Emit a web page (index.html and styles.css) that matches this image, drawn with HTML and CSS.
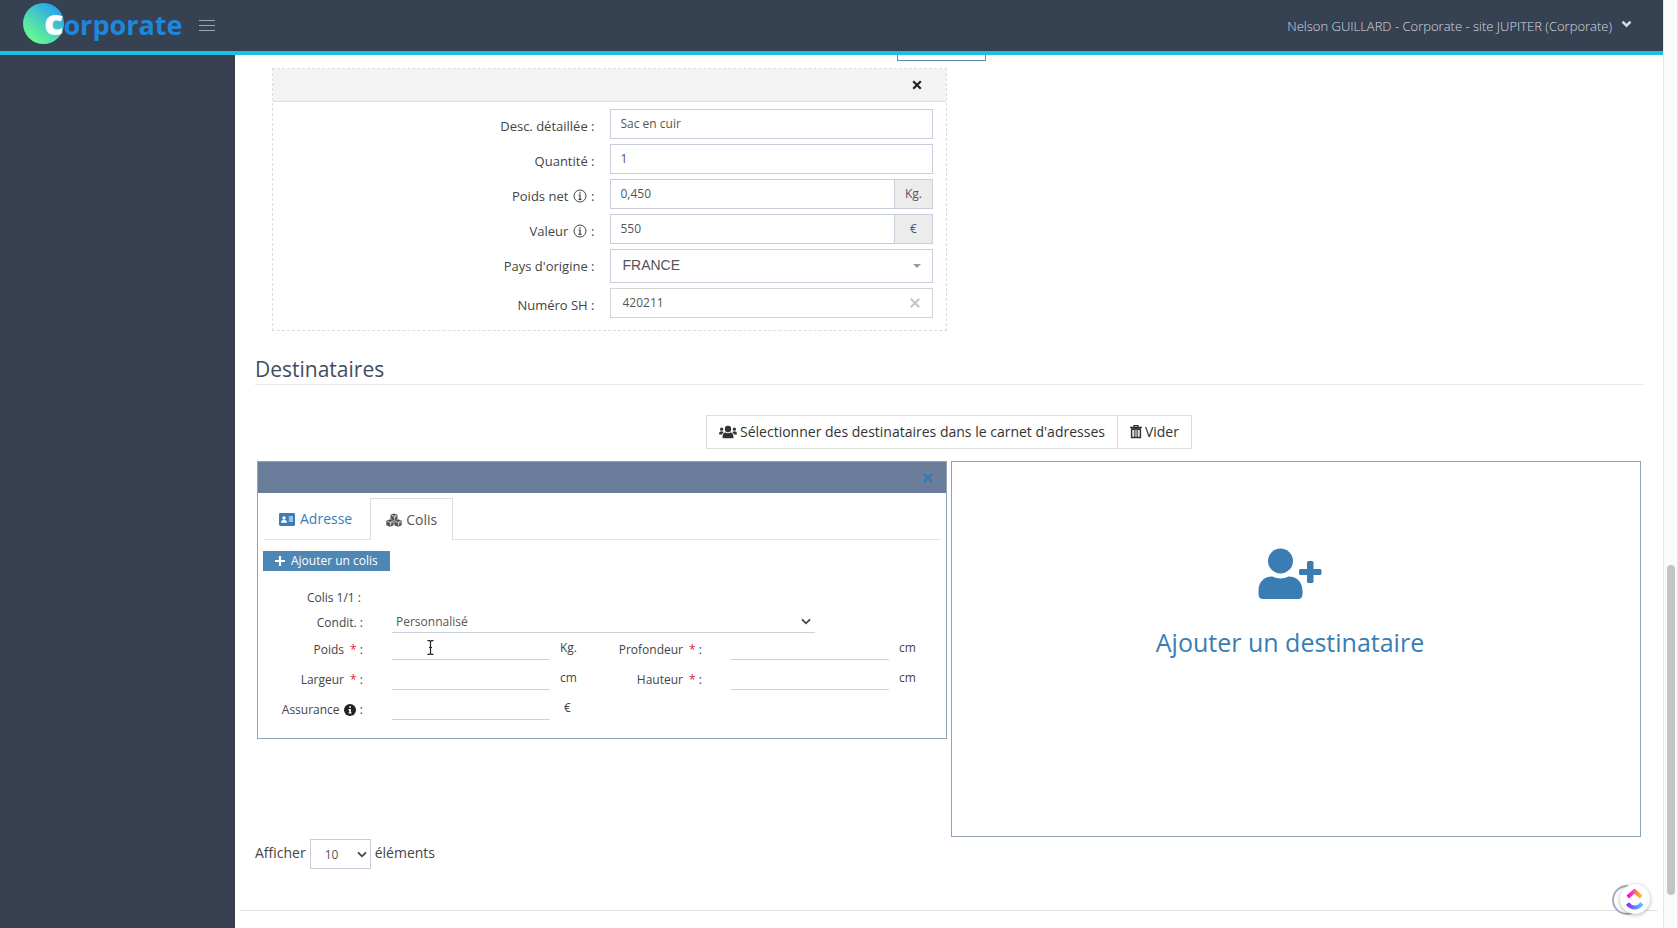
FILE: index.html
```html
<!DOCTYPE html>
<html lang="fr">
<head>
<meta charset="utf-8">
<title>Corporate - Destinataires</title>
<link rel="stylesheet" href="styles.css">
</head>
<body>
<div class="app">
  <header class="topbar">
    <a class="brand" href="#" aria-label="Corporate">
      <svg class="brand-disc" viewBox="0 0 41 41" aria-hidden="true">
        <defs><linearGradient id="disc" x1="0.15" y1="0.85" x2="0.75" y2="0.1"><stop offset="0" stop-color="#68fb90"/><stop offset="1" stop-color="#2ba6ea"/></linearGradient></defs>
        <circle cx="20.5" cy="20.5" r="20.5" fill="url(#disc)"/>
      </svg>
      <span class="brand-name"><span class="brand-initial">c</span>orporate</span>
    </a>
    <button class="menu-toggle" type="button" aria-label="Menu">
      <svg viewBox="0 0 16 12"><path d="M0 1.5h16M0 6.5h16M0 11.5h16" stroke="#9aa5b3" fill="none"/></svg>
    </button>
    <button class="account" type="button">Nelson GUILLARD - Corporate - site JUPITER (Corporate)
      <svg class="account-arrow" viewBox="0 0 11 8"><path d="M1.5 1.7 5.5 5.7 9.5 1.7" stroke="currentColor" stroke-width="2.6" fill="none"/></svg>
    </button>
  </header>

  <div class="body">
    <nav class="sidebar" aria-label="Navigation"></nav>
    <main class="content">
      <div class="columns">
        <div class="article-column">
          <div class="clipped-action"><button type="button" aria-label="Ajouter un article"></button></div>
          <section class="article">
            <div class="article-head">
              <button class="close" type="button" aria-label="Supprimer l'article">
                <svg viewBox="0 0 10 10"><path d="M1.2 1.2 8.8 8.8M8.8 1.2 1.2 8.8" stroke="currentColor" stroke-width="2.2"/></svg>
              </button>
            </div>
            <form class="article-form">
              <label for="desc">Desc. détaillée :</label>
              <input class="box" id="desc" type="text" value="Sac en cuir">
              <label for="qty">Quantité :</label>
              <input class="box" id="qty" type="text" value="1">
              <label for="net">Poids net <svg class="info" viewBox="0 0 14 14"><circle cx="7" cy="7" r="6" fill="none" stroke="currentColor"/><path d="M7 3.2v1.6M5.7 6.2H7v4M5.5 10.4h3" stroke="currentColor" stroke-width="1.2" fill="none"/></svg> :</label>
              <div class="addon-field"><input class="box" id="net" type="text" value="0,450"><span class="addon">Kg.</span></div>
              <label for="value">Valeur <svg class="info" viewBox="0 0 14 14"><circle cx="7" cy="7" r="6" fill="none" stroke="currentColor"/><path d="M7 3.2v1.6M5.7 6.2H7v4M5.5 10.4h3" stroke="currentColor" stroke-width="1.2" fill="none"/></svg> :</label>
              <div class="addon-field"><input class="box" id="value" type="text" value="550"><span class="addon">€</span></div>
              <label for="origin">Pays d'origine :</label>
              <div class="select-wrap">
                <select class="box country" id="origin"><option>FRANCE</option></select>
                <svg class="caret" viewBox="0 0 8 4"><path d="M0 0h8L4 4z" fill="#999"/></svg>
              </div>
              <label for="sh">Numéro SH :</label>
              <div class="select-wrap">
                <input class="box sh" id="sh" type="text" value="420211">
                <button class="clear" type="button" aria-label="Effacer"><svg viewBox="0 0 10 10"><path d="M.8.8 9.2 9.2M9.2.8.8 9.2" stroke="currentColor" stroke-width="2"/></svg></button>
              </div>
            </form>
          </section>
        </div>
      </div>

      <h2 class="section-title">Destinataires</h2>

      <div class="actions">
        <button type="button"><svg class="users" viewBox="0 0 18 14"><g fill="currentColor"><circle cx="9" cy="4" r="3.2"/><path d="M3.6 13.2V11c0-2 1.200-3.300 3-3.500 1.400 1 3.400 1 4.800 0 1.800.2 3 1.500 3 3.500v2.200z"/><circle cx="2.600" cy="4.200" r="1.600"/><circle cx="15.400" cy="4.200" r="1.600"/><path d="M.2 9.500V8c0-1 .7-1.600 1.600-1.600h1.800c.6 0 1 .2 1.300.5C4 7.500 3.300 8.400 3 9.500zM17.800 9.500V8c0-1-.7-1.600-1.600-1.600h-1.800c-.6 0-1 .2-1.300.5.900.6 1.600 1.500 1.900 2.600z"/></g></svg>Sélectionner des destinataires dans le carnet d'adresses</button>
        <button type="button"><svg class="trash" viewBox="0 0 12 14"><path d="M4 2V.7h4V2M0 2.400h12M1 4h10" stroke="currentColor" stroke-width="1.300" fill="none"/><path d="M1.600 4h8.800v8.600H1.600z" fill="none" stroke="currentColor" stroke-width="1.500"/><path d="M4.300 5v7M6 5v7M7.700 5v7" stroke="currentColor" stroke-width=".9"/></svg>Vider</button>
      </div>

      <div class="columns">
        <section class="card recipient">
          <div class="card-head">
            <button class="close" type="button" aria-label="Supprimer le destinataire">
              <svg viewBox="0 0 10 10"><path d="M1.200 1.200 8.800 8.800M8.800 1.200 1.200 8.800" stroke="currentColor" stroke-width="2.400"/></svg>
            </button>
          </div>
          <div class="card-body">
            <div class="tabs">
              <a class="tab" href="#adresse"><svg class="id-card" viewBox="0 0 16 13"><rect width="16" height="13" rx="1.400" fill="currentColor"/><g fill="#fff"><circle cx="5" cy="5" r="1.700"/><path d="M2 9.800c0-1.800 1-2.800 2-2.800h2c1 0 2 1 2 2.800zM9.800 3.600H14v1H9.800zM9.800 5.600H14v1H9.800zM9.800 7.600H14v1H9.800z"/></g></svg>Adresse</a>
              <a class="tab active" href="#colis"><svg class="cubes" viewBox="0 0 16 14"><g fill="currentColor"><path d="m8 .4 3.500 1.400v4.400L8 7.700 4.500 6.200V1.800z"/><path d="M4 6.200 7.700 7.800v4.400L4 13.800.3 12.200V7.800z"/><path d="m12 6.200 3.700 1.600v4.400L12 13.800l-3.700-1.600V7.800z"/></g><g stroke="#fff" stroke-width=".7" fill="none"><path d="M5.500 2.300 8 3.300l2.500-1M1.300 8.300 4 9.500l2.700-1.200M9.300 8.300 12 9.500l2.700-1.200M8.400 6.500V4.200l2-.8M4.500 12.500v-2.300l2-.8M12.500 12.500v-2.300l2-.8"/></g></svg>Colis</a>
            </div>
            <button class="add-parcel" type="button"><svg class="plus" viewBox="0 0 10 10"><path d="M5 0v10M0 5h10" stroke="currentColor" stroke-width="2.200"/></svg>Ajouter un colis</button>
            <form class="parcel">
              <div class="parcel-title">Colis 1/1 :</div>
              <div class="pack-row">
                <label for="pack">Condit. :</label>
                <div class="select-wrap pack-select">
                  <select class="line" id="pack"><option>Personnalisé</option></select>
                  <svg class="chevron" viewBox="0 0 10 7"><path d="m1 1.300 4 4 4-4" stroke="currentColor" stroke-width="1.800" fill="none"/></svg>
                </div>
              </div>
              <div class="measures">
                <div class="measure"><label for="weight">Poids <span class="required">*</span> :</label>
                  <div class="select-wrap"><input class="line" id="weight" type="text">
                    <svg class="text-cursor" viewBox="0 0 7 15"><path d="M.5.700H2.500l1 .8 1-.8h2M.5 14.300h2l1-.8 1 .8h2M3.500 1.500v12M2 7.500h3" stroke="#222" stroke-width="1.200" fill="none"/></svg>
                  </div><span class="unit">Kg.</span></div>
                <div class="measure"><label for="depth">Profondeur <span class="required">*</span> :</label><input class="line" id="depth" type="text"><span class="unit">cm</span></div>
                <div class="measure"><label for="width">Largeur <span class="required">*</span> :</label><input class="line" id="width" type="text"><span class="unit">cm</span></div>
                <div class="measure"><label for="height">Hauteur <span class="required">*</span> :</label><input class="line" id="height" type="text"><span class="unit">cm</span></div>
                <div class="measure"><label for="insurance">Assurance <svg class="info-solid" viewBox="0 0 12 12"><circle cx="6" cy="6" r="6" fill="#222"/><path d="M5.200 2.200h1.700v1.600H5.200zM4.600 5h2.300v3.400h.8v1.200H4.500V8.400h.7V6.200h-.6z" fill="#fff"/></svg> :</label><input class="line" id="insurance" type="text"><span class="unit euro">€</span></div>
              </div>
            </form>
          </div>
        </section>

        <button class="card add-recipient" type="button">
          <svg class="user-plus" viewBox="0 0 64 52"><g fill="currentColor"><circle cx="22.500" cy="13" r="12.500"/><path d="M.500 46V43C.500 34 6 28.500 14.500 28.500 19 31 26 31 30.500 28.500 39 28.500 44.500 34 44.500 43v3c0 3-1.500 5-4.500 5H5C2 51 .500 49 .500 46z"/><rect x="49" y="13" width="6.500" height="22" rx="1.500"/><rect x="41" y="21" width="22.500" height="6" rx="1.500"/></g></svg>
          <span>Ajouter un destinataire</span>
        </button>
      </div>

      <div class="page-size">
        <label for="count">Afficher</label>
        <div class="select-wrap count-select">
          <select class="box" id="count"><option>10</option></select>
          <svg class="chevron" viewBox="0 0 10 7"><path d="m1 1.300 4 4 4-4" stroke="currentColor" stroke-width="1.800" fill="none"/></svg>
        </div>
        <span>éléments</span>
      </div>
      <hr class="footer-line">
    </main>
  </div>

  <div class="scroll-track" aria-hidden="true"><div class="scroll-thumb"></div></div>

  <button class="helper" type="button" aria-label="Assistant">
    <svg viewBox="0 0 46 40">
      <defs>
        <linearGradient id="roof"><stop offset="0" stop-color="#f000e0"/><stop offset=".5" stop-color="#f5618a"/><stop offset="1" stop-color="#ffc400"/></linearGradient>
        <linearGradient id="smile"><stop offset="0" stop-color="#8930fd"/><stop offset="1" stop-color="#49ccf9"/></linearGradient>
      </defs>
      <circle cx="18" cy="20" r="14" fill="#fff" stroke="#a5abb9" stroke-width="2"/>
      <circle class="helper-disc" cx="26" cy="19" r="15" fill="#fff"/>
      <path d="m18.800 17 6.700-6 6.700 6" stroke="url(#roof)" stroke-width="3.800" fill="none"/>
      <path d="M18.500 23.500c4 5.300 10.500 5.300 14.500 0" stroke="url(#smile)" stroke-width="3.800" fill="none"/>
    </svg>
  </button>
</div>
</body>
</html>
```
FILE: styles.css
```css
* { box-sizing: border-box; }

body {
  margin: 0;
  background: #fff;
  color: #444;
  font: 14px/20px "Open Sans", sans-serif;
}

button, input, select {
  margin: 0;
  padding: 0;
  border: 0;
  border-radius: 0;
  background: none;
  color: inherit;
  font: inherit;
}

select { appearance: none; }
a { text-decoration: none; }

.app {
  position: relative;
  display: grid;
  grid-template: auto minmax(0, 1fr) / minmax(0, 1fr) 15px;
  height: 100vh;
  overflow: hidden;
}

/* Top bar */
.topbar {
  display: flex;
  align-items: center;
  height: 55px;
  padding: 0 31px 0 23px;
  border-bottom: 4px solid #1bbfe3;
  background: #364252;
}

.brand { display: flex; align-items: center; height: 41px; margin-bottom: 4px; }
.brand-disc { width: 41px; height: 41px; margin-right: -20px; }
.brand-name { z-index: 1; color: #1e87dc; font-size: 27px; font-weight: 700; line-height: 38px; }
.brand-initial { color: #fff; font-size: 36px; font-weight: 800; line-height: 38px; }
.menu-toggle { margin: 0 0 2px 17px; }
.menu-toggle svg { display: block; width: 16px; height: 12px; }
.account { display: flex; align-items: center; gap: 9px; margin-left: auto; color: #d5dbe4; font-size: 13px; font-weight: 300; }
.account-arrow { width: 11px; height: 8px; margin-bottom: 3px; }

/* Page frame */
.body { display: flex; min-height: 0; }
.sidebar { flex: 0 0 235px; background: #373f50; }
.content { flex: 1; min-width: 0; padding: 0 20px; overflow: hidden; }

.columns {
  display: grid;
  grid-template-columns: 1fr 1fr;
  align-items: start;
  gap: 4px;
  padding: 0 2px;
}

/* Article */
.clipped-action { display: grid; justify-content: end; height: 13px; margin-right: -39px; }
.clipped-action button { width: 89px; height: 6px; border: 1px solid #6288ac; border-top: 0; }

.article { margin-left: 15px; border: 1px dashed #ddd; }

.article-head {
  display: flex;
  align-items: center;
  justify-content: flex-end;
  height: 33px;
  padding-right: 24px;
  border-bottom: 1px solid #ddd;
  background: #f3f3f3;
}

.close { display: block; color: #222; }
.close svg { display: block; width: 10px; height: 10px; }

.article-form {
  display: grid;
  grid-template-columns: 322fr 324fr;
  align-items: start;
  gap: 5px 15px;
  padding: 7px 13px 12px 0;
  font-size: 13px;
}

.article-form label { padding-top: 7px; text-align: right; }
.info { width: 14px; height: 14px; margin: 0 1px; vertical-align: -2px; }

.box {
  display: block;
  width: 100%;
  height: 30px;
  padding: 0 10px 2px;
  border: 1px solid #c9cddb;
  background: #fff;
  color: #555;
  font-size: 12px;
}

.addon-field { display: flex; }
.addon-field .box { flex: 1; min-width: 0; border-right: 0; }
.addon { flex: 0 0 39px; height: 30px; padding-top: 4px; border: 1px solid #cacedb; background: #ececec; color: #555; font-size: 12px; text-align: center; }

.select-wrap { position: relative; }
.box.country { height: 34px; padding: 0 12px 3px; font: 14px/20px "Liberation Sans", sans-serif; }
.box.sh { padding-left: 12px; border-color: #d3d3d3; }
.caret { position: absolute; top: 15px; right: 12px; width: 8px; height: 4px; }
.clear { position: absolute; top: 10px; right: 13px; color: #c4c4c4; }
.clear svg { display: block; width: 10px; height: 10px; }

/* Recipients */
.section-title {
  margin: 24px 0 30px;
  padding-bottom: 1px;
  border-bottom: 1px solid #e8e8e8;
  color: #3f4d5f;
  font-size: 21px;
  font-weight: 400;
  line-height: 28px;
}

.actions { display: flex; justify-content: center; margin-bottom: 12px; }
.actions button { display: flex; align-items: center; height: 34px; padding: 0 12px; border: 1px solid #ddd; color: #333; }
.actions button + button { border-left: 0; }
.users { width: 18px; height: 14px; margin-right: 3px; }
.trash { width: 12px; height: 14px; margin-right: 3px; }

.card { border: 1px solid #93a2bb; background: #fff; }

.card-head { display: flex; align-items: center; justify-content: flex-end; height: 31px; padding-right: 13px; background: #6a7d9b; }
.card-head .close { color: #357ab5; }
.card-body { padding: 5px 5px 18px; }

.tabs { display: flex; border-bottom: 1px solid #e5e5e5; }
.tab { display: flex; align-items: center; height: 41px; padding: 0 17px 0 15px; border: 1px solid transparent; border-bottom: 0; color: #3b7db8; }
.tab.active { margin-bottom: -1px; padding: 0 15px; height: 42px; border-color: #ddd; background: #fff; color: #555; }
.id-card { width: 16px; height: 13px; margin-right: 5px; }
.cubes { width: 16px; height: 14px; margin-right: 4px; }

.add-parcel { display: flex; align-items: center; height: 20px; margin-top: 11px; padding: 0 12px; background: #4d87b5; color: #fff; font-size: 12px; }
.plus { width: 10px; height: 10px; margin-right: 6px; }

.parcel { padding-top: 17px; font-size: 12px; }
.parcel label { text-align: right; }
.parcel-title { width: 98px; text-align: right; }

.pack-row { display: grid; grid-template-columns: 100px 1fr; align-items: end; column-gap: 29px; }
.pack-select { width: 77%; }

.line { display: block; width: 100%; height: 25px; border-bottom: 1px solid #c9d2dd; color: #555; }
select.line { padding: 4px 4px 0; }
.chevron { position: absolute; top: 10px; right: 4px; width: 10px; height: 7px; }
.text-cursor { position: absolute; top: 7px; left: 35px; width: 7px; height: 15px; }

.measures { display: grid; grid-template-columns: 1fr 1fr; row-gap: 3px; }
.measure { display: flex; align-items: center; }
.measure label { flex: 0 0 100px; margin-right: 29px; padding-top: 7px; }
.measure .line { flex: 1; height: 27px; min-width: 0; }
.measure .select-wrap { flex: 1; }
.unit { flex: 0 0 52px; padding: 3px 0 0 10px; }
.unit.euro { padding-left: 14px; }
.required { margin-left: 3px; color: #e02040; }
.info-solid { width: 12px; height: 12px; margin: 0 1px; vertical-align: -2px; }

.add-recipient { display: flex; flex-direction: column; align-items: center; height: 376px; padding: 86px 12px 0 0; color: #3a7cb4; font-size: 25px; line-height: 36px; }
.user-plus { width: 64px; height: 52px; margin: 0 0 24px; }

/* Footer */
.page-size { display: flex; align-items: center; gap: 4px; }
.count-select { width: 61px; margin-top: 2px; }
.count-select .box { padding: 2px 14px 0; }
.count-select .chevron { top: 12px; }
.footer-line { margin: 41px -15px 0; border: 0; border-top: 1px solid #e1e1e1; }

/* Scroll bar and helper bubble */
.scroll-track { grid-area: 1 / 2 / 3 / 3; display: grid; grid-template-rows: 565fr 330fr 33fr; padding: 0 2px 0 3px; border: solid #e6e6e6; border-width: 0 1px; background: #fafafa; }
.scroll-thumb { grid-row: 2; border-radius: 4px; background: #c4c4c4; }
.helper { position: absolute; right: 23px; bottom: 8px; }
.helper svg { display: block; width: 46px; height: 40px; }
.helper-disc { filter: drop-shadow(0 1px 2px rgba(0, 0, 0, .3)); }
```
